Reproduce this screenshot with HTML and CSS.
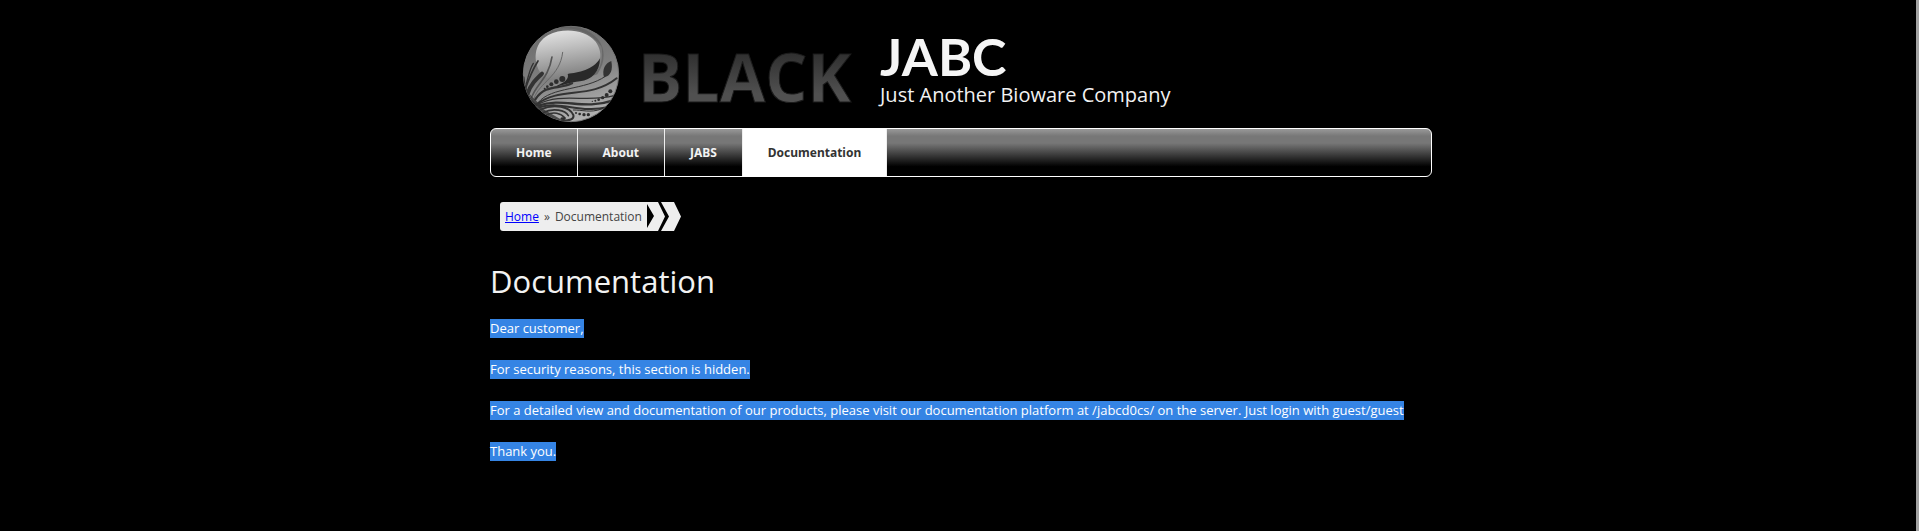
FILE: index.html
```html
<!DOCTYPE html>
<html lang="en">
<head>
<meta charset="utf-8">
<title>Documentation | JABC</title>
<meta name="viewport" content="width=device-width, initial-scale=1">
<link rel="stylesheet" href="styles.css">
</head>
<body>
<div class="page">
  <header class="header">
    <a class="logo" href="#" aria-label="Black">
      <svg width="390" height="118" viewBox="0 0 390 118">
        <defs>
          <linearGradient id="ball" x1="0.3" y1="0" x2="0.6" y2="1">
            <stop offset="0" stop-color="#6a6a6a"/><stop offset=".5" stop-color="#808080"/><stop offset="1" stop-color="#b4b4b4"/>
          </linearGradient>
          <linearGradient id="gloss" x1=".3" y1="0" x2=".5" y2="1">
            <stop offset="0" stop-color="#e2e2e2"/><stop offset=".35" stop-color="#c0c0c0"/><stop offset="1" stop-color="#7c7c7c"/>
          </linearGradient>
          <linearGradient id="metal" x1="0" y1="0" x2="0" y2="1">
            <stop offset=".2" stop-color="#2c2c2c"/><stop offset=".7" stop-color="#505050"/>
          </linearGradient>
          <clipPath id="disc"><circle cx="183" cy="177" r="143"/></clipPath>
        </defs>
        <g transform="translate(20 5) scale(.3333)">
          <circle cx="183" cy="177" r="143" fill="url(#ball)" stroke="#777" stroke-width="3"/>
          <g clip-path="url(#disc)">
            <path d="M70 70C110 30 220 20 275 95C282 150 262 180 225 190L262 178C300 120 280 60 210 38C150 25 100 40 70 70Z" fill="#5b5b5b" opacity=".6"/>
            <path d="M93 176C68 140 70 85 115 60C160 38 225 43 257 80C285 120 270 164 225 170C190 175 130 215 93 176Z" fill="url(#gloss)"/>
            <path d="M173 177C205 172 250 166 270 130C270 170 245 195 210 199C180 202 150 213 125 219C150 209 180 197 173 177Z" fill="#292929"/>
            <path d="M282 187C275 163 286 144 304 138C309 164 303 183 282 187Z" fill="#333"/>
            <g fill="none" stroke="#333" stroke-linecap="round">
              <path d="M286 184C225 227 125 214 85 262" stroke-width="3"/>
              <path d="M49 207C55 182 60 160 70 145" stroke-width="4"/>
              <path d="M45 225C55 195 67 165 84 138" stroke-width="5"/>
              <path d="M53 236C62 208 78 193 96 176" stroke-width="12"/>
              <path d="M65 247C80 205 116 191 126 126" stroke-width="5" stroke="#555"/>
              <path d="M72 250C88 202 150 185 158 112" stroke-width="3" stroke="#666"/>
              <path d="M76 253C108 205 147 225 186 205" stroke-width="7"/>
              <path d="M80 268C150 214 240 254 320 190" stroke-width="6"/>
              <path d="M82 269C155 230 230 265 312 242" stroke-width="4"/>
              <path d="M85 272C160 246 220 287 310 256" stroke-width="7"/>
              <path d="M88 277C155 257 210 296 292 277" stroke-width="6"/>
              <path d="M91 284C135 263 180 277 190 300C194 315 175 316 154 318" stroke-width="6"/>
              <path d="M99 293C130 277 166 286 175 302" stroke-width="5"/>
              <path d="M109 300C130 289 152 294 165 309" stroke-width="5"/>
              <path d="M40 187C44 235 63 264 80 270" stroke-width="7"/>
              <path d="M190 285C216 284 240 295 275 282" stroke-width="3"/>
            </g>
            <path d="M43 205C56 250 78 247 95 280L165 320L130 321L82 292Z" fill="#353535" opacity=".8"/>
            <g fill="#2d2d2d">
              <circle cx="157" cy="192" r="9"/><circle cx="139" cy="200" r="7"/><circle cx="124" cy="208" r="6"/><circle cx="112" cy="215" r="4"/><circle cx="104" cy="221" r="3"/>
              <circle cx="301" cy="229" r="6"/><circle cx="290" cy="240" r="6"/><circle cx="278" cy="248" r="5"/><circle cx="266" cy="254" r="4"/><circle cx="256" cy="257" r="3"/><circle cx="247" cy="259" r="2"/>
              <circle cx="235" cy="299" r="5"/><circle cx="222" cy="299" r="5"/><circle cx="209" cy="297" r="4"/><circle cx="198" cy="294" r="3"/><ellipse cx="159" cy="311" rx="8" ry="4"/>
            </g>
          </g>
        </g>
        <text class="wordmark" x="148" y="92" fill="url(#metal)">BLACK</text>
      </svg>
    </a>
    <div class="branding">
      <div class="site-name">JABC</div>
      <div class="slogan">Just Another Bioware Company</div>
    </div>
  </header>
  <nav class="menu" aria-label="Main menu">
    <a href="#">Home</a>
    <a href="#">About</a>
    <a href="#">JABS</a>
    <a href="#" class="active" aria-current="page">Documentation</a>
  </nav>
  <nav class="breadcrumb" aria-label="Breadcrumb">
    <div class="trail"><a href="#">Home</a><span>»</span><span>Documentation</span></div>
    <svg width="34" height="29" viewBox="0 0 34 29" fill="#eee" aria-hidden="true">
      <path d="M0 0H11L18 14.500L11 29H0V26L7 14L0 2ZM14 0H27L34 14.500L27 29H14L22 14.500Z"/>
    </svg>
  </nav>
  <main class="content">
    <h1>Documentation</h1>
    <p><mark>Dear customer,</mark></p>
    <p><mark>For security reasons, this section is hidden.</mark></p>
    <p><mark>For a detailed view and documentation of our products, please visit our documentation platform at /jabcd0cs/ on the server. Just login with guest/guest</mark></p>
    <p><mark>Thank you.</mark></p>
  </main>
</div>
</body>
</html>
```
FILE: styles.css
```css
* { box-sizing: border-box; }
body {
  margin: 0;
  min-height: 100vh;
  background: #000;
  border-right: 3px solid #a3a3a3;
  color: #f2f2f2;
  font: 13px/19px "Open Sans", "Noto Sans", sans-serif;
}
.page {
  max-width: 948px;
  margin: 0 auto;
  padding: 10px 0 40px 6px;
}
.header { display: flex; }
.logo { flex: none; }
.logo svg { display: block; }
.wordmark {
  font: bold 66px "Open Sans", sans-serif;
  stroke: #1c1c1c;
  stroke-width: 1px;
}
.branding { padding-top: 19px; }
.site-name {
  color: #f5f5f5;
  font-family: Lato, sans-serif;
  font-size: 52px;
  font-weight: bold;
  line-height: 54px;
}
.slogan { font-size: 20px; line-height: 24px; }
.menu {
  display: flex;
  height: 49px;
  overflow: hidden;
  border: 1px solid #fff;
  border-radius: 6px;
  background: linear-gradient(#999, #777 15%, #777 30%, #000 80%);
}
.menu a {
  padding: 0 25px;
  border-right: 1px solid #eee;
  color: #f2f2f2;
  font-family: "Noto Sans", sans-serif;
  font-size: 12px;
  font-weight: bold;
  line-height: 48px;
  text-decoration: none;
}
.menu .active { background: #fff; color: #333; }
.breadcrumb { display: flex; margin: 25px 10px 0; }
.breadcrumb svg { flex: none; }
.trail {
  display: flex;
  gap: 5px;
  padding: 0 5px;
  border-radius: 3px 0 0 3px;
  background: #eee;
  color: #444;
  font-size: 12px;
  line-height: 29px;
}
.trail a { color: #00f; }
h1 {
  margin: 26px 0 14px;
  font-size: 31px;
  font-weight: normal;
  line-height: 48px;
}
p { margin: 0 0 22px; }
mark { display: inline-block; background: #3584e4; color: #fff; }
```
